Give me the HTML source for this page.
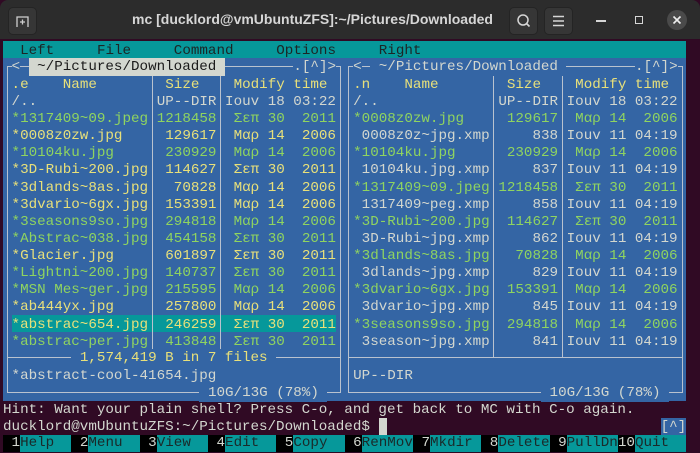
<!DOCTYPE html>
<html><head><meta charset="utf-8"><style>
html,body{margin:0;padding:0;}
body{width:700px;height:453px;overflow:hidden;background:#300a24;position:relative;font-family:"Liberation Mono",monospace;font-size:14.23px;color:#d3d7cf;}
#tb{position:absolute;left:0;top:0;width:700px;height:39px;background:#2c2c2c;border-radius:8px 8px 0 0;}
#tt{position:absolute;left:0;width:625px;top:11px;text-align:center;font:bold 14px "Liberation Sans",sans-serif;color:#d6d6d6;}
.btn{position:absolute;top:7px;width:27px;height:26px;border-radius:5px;background:#363636;border:1px solid #242424;}
.r{position:absolute;left:0;width:700px;height:17.13px;line-height:17.13px;}
.s{position:absolute;left:calc(3px + var(--c)*8.54px);white-space:pre;top:1.5px;}
.fk .s{top:0}
.g{color:#8fd460}.y{color:#e8e07a}.w{color:#d3d7cf}
.bl{background:#3465a4}
.vl{position:absolute;width:1px;background:#b9c2cf;}
.hl{position:absolute;height:1px;background:#b9c2cf;}
.num{background:#000;color:#d3d7cf}
.lab{background:#06989a;color:#1a2a2a}
</style></head><body>
<div id="tb">
 <div class="btn" style="left:8px;"><svg width="27" height="26" viewBox="0 0 27 26"><path d="M8 19V9h11v10M11 14h5M13.5 11.5v5" stroke="#cfcfcf" stroke-width="1.3" fill="none"/></svg></div>
 <div id="tt">mc [ducklord@vmUbuntuZFS]:~/Pictures/Downloaded</div>
 <div class="btn" style="left:509px;"><svg width="27" height="26" viewBox="0 0 27 26"><circle cx="13" cy="12" r="5" stroke="#d6d6d6" stroke-width="1.5" fill="none"/><path d="M16.5 15.5l3 3" stroke="#d6d6d6" stroke-width="1.6"/></svg></div>
 <div class="btn" style="left:544px;"><svg width="27" height="26" viewBox="0 0 27 26"><path d="M8 8.5h11M8 13h11M8 17.5h11" stroke="#d6d6d6" stroke-width="1.4"/></svg></div>
 <div style="position:absolute;left:596px;top:20px;width:10px;height:2px;background:#d6d6d6"></div>
 <div style="position:absolute;left:635px;top:16px;width:6px;height:6px;border:1.5px solid #d6d6d6"></div>
 <div style="position:absolute;left:667px;top:10px;width:20px;height:20px;border-radius:50%;background:#4a4a4a"></div>
 <svg style="position:absolute;left:667px;top:10px" width="20" height="20"><path d="M6.5 6.5l7 7M13.5 6.5l-7 7" stroke="#eee" stroke-width="1.6"/></svg>
</div>
<div style="position:absolute;left:3px;top:41px;width:683px;height:17.13px;background:#06989a"></div>
<div style="position:absolute;left:3px;top:58.13px;width:683px;height:342.6px;background:#3465a4"></div>
<div style="position:absolute;left:11.5px;top:315.1px;width:324.5px;height:17.13px;background:#06989a"></div>
<div style="position:absolute;left:7px;top:66px;width:332px;height:325px;border:1px solid #b9c2cf"></div>
<div style="position:absolute;left:348px;top:66px;width:333px;height:325px;border:1px solid #b9c2cf"></div>
<div class="hl" style="left:7px;width:333px;top:357px"></div>
<div class="hl" style="left:348px;width:334px;top:357px"></div>
<div class="vl" style="left:152px;top:75px;height:282px"></div>
<div class="vl" style="left:220px;top:75px;height:282px"></div>
<div class="vl" style="left:493px;top:75px;height:282px"></div>
<div class="vl" style="left:562px;top:75px;height:282px"></div>

<div class="r" style="top:41px;color:#1c2626">
<span class="s" style="--c:2">Left</span><span class="s" style="--c:11">File</span><span class="s" style="--c:20">Command</span><span class="s" style="--c:32">Options</span><span class="s" style="--c:44">Right</span></div>

<div class="r" style="top:58.13px">
<span class="s bl" style="--c:1;top:0;line-height:18px">&lt;</span><span class="s" style="--c:3;top:0;background:#d3d7cf;color:#1a1a1a;line-height:18px"> ~/Pictures/Downloaded </span><span class="s bl" style="--c:34;top:0;line-height:18px">.[^]&gt;</span>
<span class="s bl" style="--c:41;top:0;line-height:18px">&lt;</span><span class="s bl" style="--c:43;top:0;line-height:18px"> ~/Pictures/Downloaded </span><span class="s bl" style="--c:74;top:0;line-height:18px">.[^]&gt;</span></div>

<div class="r y" style="top:75.26px">
<span class="s" style="--c:1">.e</span><span class="s" style="--c:7">Name</span><span class="s" style="--c:19">Size</span><span class="s" style="--c:27">Modify time</span>
<span class="s" style="--c:41">.n</span><span class="s" style="--c:47">Name</span><span class="s" style="--c:59">Size</span><span class="s" style="--c:67">Modify time</span></div>

<div class="r w" style="top:92.39px">
<span class="s" style="--c:1">/..</span><span class="s" style="--c:18">UP--DIR</span><span class="s" style="--c:26">Iouv 18 03:22</span>
<span class="s" style="--c:41">/..</span><span class="s" style="--c:58">UP--DIR</span><span class="s" style="--c:66">Iouv 18 03:22</span></div>

<div class="r" style="top:109.52px">
<span class="s g" style="--c:1">*1317409~09.jpeg</span><span class="s g" style="--c:18">1218458</span><span class="s g" style="--c:26"> Σεπ 30  2011</span>
<span class="s g" style="--c:41">*0008z0zw.jpg</span><span class="s g" style="--c:59">129617</span><span class="s g" style="--c:66"> Μαρ 14  2006</span></div>

<div class="r" style="top:126.65px">
<span class="s y" style="--c:1">*0008z0zw.jpg</span><span class="s y" style="--c:19">129617</span><span class="s y" style="--c:26"> Μαρ 14  2006</span>
<span class="s w" style="--c:41"> 0008z0z~jpg.xmp</span><span class="s w" style="--c:62">838</span><span class="s w" style="--c:66">Iouv 11 04:19</span></div>

<div class="r" style="top:143.78px">
<span class="s g" style="--c:1">*10104ku.jpg</span><span class="s g" style="--c:19">230929</span><span class="s g" style="--c:26"> Μαρ 14  2006</span>
<span class="s g" style="--c:41">*10104ku.jpg</span><span class="s g" style="--c:59">230929</span><span class="s g" style="--c:66"> Μαρ 14  2006</span></div>

<div class="r" style="top:160.91px">
<span class="s y" style="--c:1">*3D-Rubi~200.jpg</span><span class="s y" style="--c:19">114627</span><span class="s y" style="--c:26"> Σεπ 30  2011</span>
<span class="s w" style="--c:41"> 10104ku.jpg.xmp</span><span class="s w" style="--c:62">837</span><span class="s w" style="--c:66">Iouv 11 04:19</span></div>

<div class="r" style="top:178.04px">
<span class="s y" style="--c:1">*3dlands~8as.jpg</span><span class="s y" style="--c:20">70828</span><span class="s y" style="--c:26"> Μαρ 14  2006</span>
<span class="s g" style="--c:41">*1317409~09.jpeg</span><span class="s g" style="--c:58">1218458</span><span class="s g" style="--c:66"> Σεπ 30  2011</span></div>

<div class="r" style="top:195.17px">
<span class="s y" style="--c:1">*3dvario~6gx.jpg</span><span class="s y" style="--c:19">153391</span><span class="s y" style="--c:26"> Μαρ 14  2006</span>
<span class="s w" style="--c:41"> 1317409~peg.xmp</span><span class="s w" style="--c:62">858</span><span class="s w" style="--c:66">Iouv 11 04:19</span></div>

<div class="r" style="top:212.3px">
<span class="s g" style="--c:1">*3seasons9so.jpg</span><span class="s g" style="--c:19">294818</span><span class="s g" style="--c:26"> Μαρ 14  2006</span>
<span class="s g" style="--c:41">*3D-Rubi~200.jpg</span><span class="s g" style="--c:59">114627</span><span class="s g" style="--c:66"> Σεπ 30  2011</span></div>

<div class="r" style="top:229.43px">
<span class="s g" style="--c:1">*Abstrac~038.jpg</span><span class="s g" style="--c:19">454158</span><span class="s g" style="--c:26"> Σεπ 30  2011</span>
<span class="s w" style="--c:41"> 3D-Rubi~jpg.xmp</span><span class="s w" style="--c:62">862</span><span class="s w" style="--c:66">Iouv 11 04:19</span></div>

<div class="r" style="top:246.56px">
<span class="s y" style="--c:1">*Glacier.jpg</span><span class="s y" style="--c:19">601897</span><span class="s y" style="--c:26"> Σεπ 30  2011</span>
<span class="s g" style="--c:41">*3dlands~8as.jpg</span><span class="s g" style="--c:60">70828</span><span class="s g" style="--c:66"> Μαρ 14  2006</span></div>

<div class="r" style="top:263.69px">
<span class="s g" style="--c:1">*Lightni~200.jpg</span><span class="s g" style="--c:19">140737</span><span class="s g" style="--c:26"> Σεπ 30  2011</span>
<span class="s w" style="--c:41"> 3dlands~jpg.xmp</span><span class="s w" style="--c:62">829</span><span class="s w" style="--c:66">Iouv 11 04:19</span></div>

<div class="r" style="top:280.82px">
<span class="s g" style="--c:1">*MSN Mes~ger.jpg</span><span class="s g" style="--c:19">215595</span><span class="s g" style="--c:26"> Μαρ 14  2006</span>
<span class="s g" style="--c:41">*3dvario~6gx.jpg</span><span class="s g" style="--c:59">153391</span><span class="s g" style="--c:66"> Μαρ 14  2006</span></div>

<div class="r" style="top:297.95px">
<span class="s y" style="--c:1">*ab444yx.jpg</span><span class="s y" style="--c:19">257800</span><span class="s y" style="--c:26"> Μαρ 14  2006</span>
<span class="s w" style="--c:41"> 3dvario~jpg.xmp</span><span class="s w" style="--c:62">845</span><span class="s w" style="--c:66">Iouv 11 04:19</span></div>

<div class="r" style="top:315.08px">
<span class="s y" style="--c:1">*abstrac~654.jpg</span><span class="s y" style="--c:19">246259</span><span class="s y" style="--c:26"> Σεπ 30  2011</span>
<span class="s g" style="--c:41">*3seasons9so.jpg</span><span class="s g" style="--c:59">294818</span><span class="s g" style="--c:66"> Μαρ 14  2006</span></div>

<div class="r" style="top:332.21px">
<span class="s g" style="--c:1">*abstrac~per.jpg</span><span class="s g" style="--c:19">413848</span><span class="s g" style="--c:26"> Σεπ 30  2011</span>
<span class="s w" style="--c:41"> 3season~jpg.xmp</span><span class="s w" style="--c:62">841</span><span class="s w" style="--c:66">Iouv 11 04:19</span></div>

<div class="r" style="top:349.34px">
<span class="s y bl" style="--c:8;top:0;line-height:18px"> 1,574,419 B in 7 files </span></div>

<div class="r w" style="top:366.47px">
<span class="s" style="--c:1">*abstract-cool-41654.jpg</span><span class="s" style="--c:41">UP--DIR</span></div>

<div class="r w" style="top:383.6px">
<span class="s bl" style="--c:23;top:0;line-height:18px"> 10G/13G (78%) </span><span class="s bl" style="--c:63;top:0;line-height:18px"> 10G/13G (78%) </span></div>

<div class="r w" style="top:400.73px">
<span class="s" style="--c:0">Hint: Want your plain shell? Press C-o, and get back to MC with C-o again.</span></div>

<div class="r w" style="top:417.86px">
<span class="s" style="--c:0">ducklord@vmUbuntuZFS:~/Pictures/Downloaded$ </span><span class="s" style="--c:44;background:#d3d7cf;width:8.54px;height:17.13px;top:0"></span><span class="s bl" style="--c:77;top:0;line-height:17.13px;padding-top:1.5px">[^]</span></div>

<div class="r fk" style="top:434.99px;background:#000;left:3px;width:683px">
<span class="s num" style="left:0"> 1</span><span class="s lab" style="left:calc(2*8.54px)">Help  </span>
<span class="s num" style="left:calc(8*8.54px)"> 2</span><span class="s lab" style="left:calc(10*8.54px)">Menu  </span>
<span class="s num" style="left:calc(16*8.54px)"> 3</span><span class="s lab" style="left:calc(18*8.54px)">View  </span>
<span class="s num" style="left:calc(24*8.54px)"> 4</span><span class="s lab" style="left:calc(26*8.54px)">Edit  </span>
<span class="s num" style="left:calc(32*8.54px)"> 5</span><span class="s lab" style="left:calc(34*8.54px)">Copy  </span>
<span class="s num" style="left:calc(40*8.54px)"> 6</span><span class="s lab" style="left:calc(42*8.54px)">RenMov</span>
<span class="s num" style="left:calc(48*8.54px)"> 7</span><span class="s lab" style="left:calc(50*8.54px)">Mkdir </span>
<span class="s num" style="left:calc(56*8.54px)"> 8</span><span class="s lab" style="left:calc(58*8.54px)">Delete</span>
<span class="s num" style="left:calc(64*8.54px)"> 9</span><span class="s lab" style="left:calc(66*8.54px)">PullDn</span>
<span class="s num" style="left:calc(72*8.54px)">10</span><span class="s lab" style="left:calc(74*8.54px)">Quit  </span></div>
</body></html>
